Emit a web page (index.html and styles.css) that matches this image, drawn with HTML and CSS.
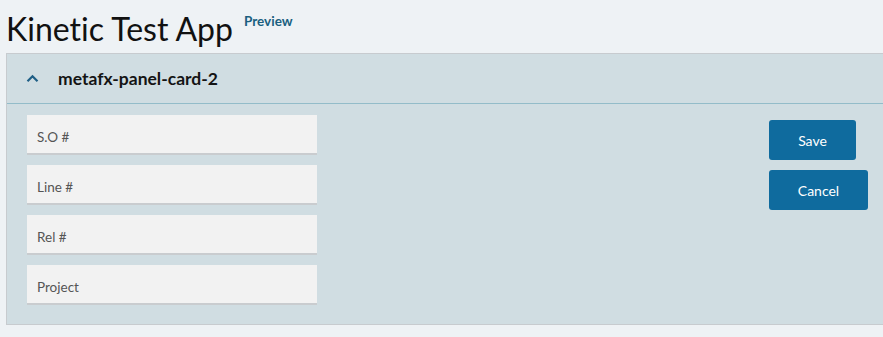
FILE: index.html
```html
<!DOCTYPE html>
<html>
<head>
<meta charset="utf-8">
<link rel="stylesheet" href="styles.css">
</head>
<body>
<header class="app-header">
  <h1 class="app-title">Kinetic Test App</h1>
  <span class="app-badge">Preview</span>
</header>
<section class="panel">
  <div class="panel-head">
    <svg class="chevron" width="13" height="9" viewBox="0 0 13 9"><path d="M1.5 7.2 L6.5 2.2 L11.5 7.2" fill="none" stroke="#1f5f86" stroke-width="2.2"/></svg>
    <span class="panel-title">metafx-panel-card-2</span>
  </div>
  <div class="panel-body">
    <div class="fields">
      <div class="field">S.O #</div>
      <div class="field">Line #</div>
      <div class="field">Rel #</div>
      <div class="field">Project</div>
    </div>
    <div class="actions">
      <button class="btn btn-save">Save</button>
      <button class="btn btn-cancel">Cancel</button>
    </div>
  </div>
</section>
</body>
</html>
```
FILE: styles.css
```css
html, body { margin: 0; padding: 0; }
body {
  background: #eef2f5;
  font-family: Lato, "Noto Sans", sans-serif;
  font-variant-ligatures: none;
  width: 883px;
  height: 337px;
  overflow: hidden;
}
.app-header {
  display: flex;
  align-items: flex-start;
  height: 53px;
  padding-left: 6px;
  box-sizing: border-box;
}
.app-title {
  margin: 9px 0 0 0;
  font-weight: 400;
  font-size: 32px;
  line-height: 40px;
  color: #111;
}
.app-badge {
  margin: 13px 0 0 11px;
  font-size: 13.5px;
  font-weight: 700;
  color: #1a5f7f;
}
.panel {
  margin-left: 6px;
  background: #d0dde2;
  border: 1px solid #c7cbcf;
  border-right: none;
  height: 272px;
  box-sizing: border-box;
}
.panel-head {
  display: flex;
  align-items: center;
  height: 50px;
  border-bottom: 1px solid #93bcc9;
  box-sizing: border-box;
  padding-left: 19px;
}
.chevron { display: block; }
.panel-title {
  margin-left: 19px;
  font-weight: 700;
  font-size: 17.5px;
  color: #141414;
}
.panel-body {
  display: flex;
  justify-content: space-between;
  padding: 11px 15px 0 20px;
}
.fields {
  display: flex;
  flex-direction: column;
  gap: 10px;
}
.field {
  width: 290px;
  height: 40px;
  box-sizing: border-box;
  background: #f2f2f2;
  border-bottom: 2px solid #c9cccf;
  padding-left: 10px;
  display: flex;
  align-items: center;
  padding-top: 6px;
  font-size: 13.5px;
  color: #555;
}
.actions {
  display: flex;
  flex-direction: column;
  align-items: flex-start;
  gap: 10px;
  padding-top: 5px;
}
.btn {
  height: 40px;
  border: none;
  border-radius: 3px;
  background: #0f6b9e;
  color: #fff;
  font-family: inherit;
  font-size: 14px;
  padding: 0;
}
.btn-save { width: 87px; }
.btn-cancel { width: 99px; }
```
